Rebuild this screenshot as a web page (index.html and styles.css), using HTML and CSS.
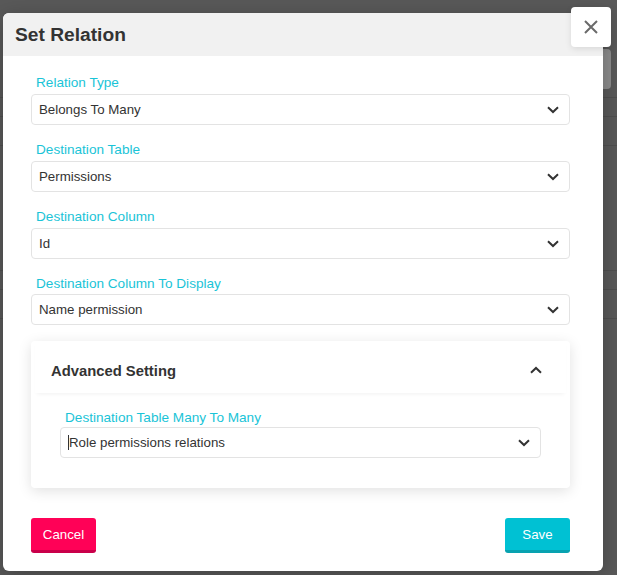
FILE: index.html
```html
<!DOCTYPE html>
<html>
<head>
<meta charset="utf-8">
<link rel="stylesheet" href="styles.css">
</head>
<body>
<div class="page">
  <div class="bg-rows">
    <div class="bg-row r1"></div>
    <div class="bg-row r2"></div>
    <div class="bg-row r3"></div>
    <div class="bg-row r4"></div>
    <div class="bg-row r5"></div>
    <div class="bg-row r6"></div>
  </div>
  <div class="bg-thumb"></div>

  <div class="modal">
    <div class="modal-header">Set Relation</div>
    <div class="modal-body">
      <div class="field">
        <label class="field-label">Relation Type</label>
        <div class="select"><span class="select-text">Belongs To Many</span><svg class="chev" width="12" height="8" viewBox="0 0 12 8"><polyline points="1,1.2 6,6 11,1.2" fill="none" stroke="#333" stroke-width="2"/></svg></div>
      </div>
      <div class="field">
        <label class="field-label">Destination Table</label>
        <div class="select"><span class="select-text">Permissions</span><svg class="chev" width="12" height="8" viewBox="0 0 12 8"><polyline points="1,1.2 6,6 11,1.2" fill="none" stroke="#333" stroke-width="2"/></svg></div>
      </div>
      <div class="field">
        <label class="field-label">Destination Column</label>
        <div class="select"><span class="select-text">Id</span><svg class="chev" width="12" height="8" viewBox="0 0 12 8"><polyline points="1,1.2 6,6 11,1.2" fill="none" stroke="#333" stroke-width="2"/></svg></div>
      </div>
      <div class="field last">
        <label class="field-label">Destination Column To Display</label>
        <div class="select"><span class="select-text">Name permission</span><svg class="chev" width="12" height="8" viewBox="0 0 12 8"><polyline points="1,1.2 6,6 11,1.2" fill="none" stroke="#333" stroke-width="2"/></svg></div>
      </div>

      <div class="card">
        <div class="card-header">
          <span class="card-title">Advanced Setting</span>
          <svg class="chev" width="12" height="8" viewBox="0 0 12 8"><polyline points="1,6.8 6,2 11,6.8" fill="none" stroke="#333" stroke-width="2"/></svg>
        </div>
        <div class="card-body">
          <label class="field-label">Destination Table Many To Many</label>
          <div class="select inner"><span class="select-text"><span class="caret"></span>Role permissions relations</span><svg class="chev" width="12" height="8" viewBox="0 0 12 8"><polyline points="1,1.2 6,6 11,1.2" fill="none" stroke="#333" stroke-width="2"/></svg></div>
        </div>
      </div>

      <div class="actions">
        <button class="btn btn-cancel">Cancel</button>
        <button class="btn btn-save">Save</button>
      </div>
    </div>
  </div>

  <button class="close-btn" aria-label="Close"><svg width="16" height="16" viewBox="0 0 16 16"><path d="M2 2 L14 14 M14 2 L2 14" stroke="#6a6a6a" stroke-width="2" fill="none"/></svg></button>
</div>
</body>
</html>
```

FILE: styles.css
```css
html, body {
  margin: 0;
  padding: 0;
}
body {
  background: #595959;
  font-family: "Liberation Sans", Arial, sans-serif;
  width: 617px;
  height: 575px;
  overflow: hidden;
}
.page {
  position: relative;
  width: 617px;
  height: 575px;
}
.bg-rows {
  display: flex;
  flex-direction: column;
}
.bg-row {
  border-bottom: 1px solid #4f4f4f;
}
.r1 { height: 97px; }
.r2 { height: 18px; }
.r3 { height: 28px; }
.r4 { height: 124px; }
.r5 { height: 18px; }
.r6 { height: 28px; }
.bg-thumb {
  position: absolute;
  left: 603px;
  top: 49px;
  width: 8px;
  height: 40px;
  background: #8c8c8c;
  border-radius: 0 4px 4px 0;
}
.modal {
  position: absolute;
  left: 3px;
  top: 13px;
  width: 600px;
  height: 558px;
  background: #fff;
  border-radius: 6px;
  overflow: hidden;
  box-shadow: 0 4px 20px rgba(0,0,0,0.25);
}
.modal-header {
  height: 43px;
  background: #f1f1f1;
  padding-left: 12px;
  font-size: 19.2px;
  font-weight: bold;
  color: #333;
  line-height: 43px;
}
.modal-body {
  padding: 19px 33px 0 28px;
}
.field {
  margin-bottom: 17px;
}
.field.last {
  margin-bottom: 16px;
}
.field.last .field-label {
  margin-bottom: 2px;
}
.field-label {
  display: block;
  padding-left: 5px;
  font-size: 13.6px;
  line-height: 16px;
  color: #1ac4d7;
  margin-bottom: 3px;
}
.select {
  height: 29px;
  border: 1px solid #e3e3e3;
  border-radius: 4px;
  display: flex;
  align-items: center;
  justify-content: space-between;
  padding: 0 10px 0 7px;
  background: #fff;
}
.select-text {
  font-size: 13.3px;
  color: #333;
  display: flex;
  align-items: center;
}
.caret {
  display: inline-block;
  width: 1px;
  height: 15px;
  background: #333;
  margin-right: 0;
}
.chev {
  display: block;
}
.card {
  background: #fff;
  border-radius: 4px;
  box-shadow: 0 3px 14px rgba(0,0,0,0.12);
  height: 147px;
}
.card-header {
  height: 46px;
  margin: 0 4px;
  padding: 6px 24px 0 16px;
  display: flex;
  align-items: center;
  justify-content: space-between;
  box-shadow: 0 3px 4px -2px rgba(0,0,0,0.06);
}
.card-title {
  font-size: 14.8px;
  font-weight: bold;
  color: #333;
  padding-top: 1px;
}
.card-body {
  padding: 17px 29px 30px 29px;
}
.card-body .field-label {
  margin-bottom: 1px;
}
.actions {
  display: flex;
  justify-content: space-between;
  margin-top: 30px;
}
.btn {
  height: 35px;
  width: 65px;
  border: none;
  border-radius: 3px;
  font-family: "Liberation Sans", Arial, sans-serif;
  font-size: 13.3px;
  color: #fff;
  padding: 0;
  padding-top: 1px;
}
.btn-cancel {
  background: #ff0157;
  border-bottom: 3px solid #c9004a;
}
.btn-save {
  background: #00c1d3;
  border-bottom: 3px solid #08a2b0;
}
.close-btn {
  position: absolute;
  left: 571px;
  top: 7px;
  width: 40px;
  height: 40px;
  background: #fff;
  border: none;
  border-radius: 4px;
  display: flex;
  align-items: center;
  justify-content: center;
  padding: 0;
  box-shadow: 0 2px 6px rgba(0,0,0,0.1);
}
```
